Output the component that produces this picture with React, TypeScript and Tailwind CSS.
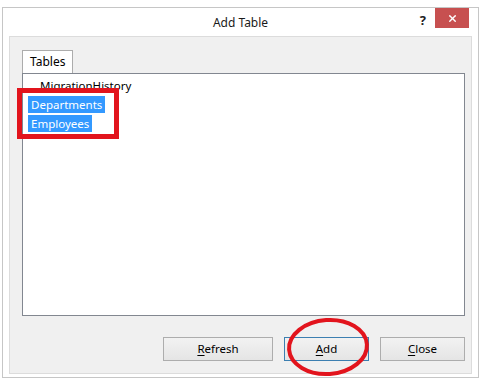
import { X } from 'lucide-react'

const rows = [
  { name: 'MigrationHistory', selected: false },
  { name: 'Departments', selected: true },
  { name: 'Employees', selected: true },
]

function DialogButton({ label, accessKey, width, isDefault }: { label: string; accessKey: number; width: string; isDefault?: boolean }) {
  return (
    <button
      className={`${width} h-[24px] text-[11.5px] text-black bg-gradient-to-b from-[#f2f2f2] to-[#e5e5e5] border ${
        isDefault ? 'border-[#3c7fb1]' : 'border-[#adadad]'
      }`}
    >
      {label.slice(0, accessKey)}
      <span className="underline underline-offset-2">{label[accessKey]}</span>
      {label.slice(accessKey + 1)}
    </button>
  )
}

export default function App() {
  return (
    <div
      className="relative w-[481px] h-[379px] bg-white pt-[7px] pl-[2px] overflow-hidden"
      style={{ fontFamily: '"Noto Sans", "Segoe UI", sans-serif' }}
    >
      {/* dialog window */}
      <div className="w-[477px] h-[371px] border border-[#c6c6c6] bg-white flex flex-col">
        <div className="h-[28px] flex items-start">
          <div className="w-[62px]" />
          <div className="flex-1 text-center text-[12px] text-[#1a1a1a] pt-[6px]">Add Table</div>
          <div className="w-[62px] flex items-start justify-end pr-[9px]">
            <span className="text-[13px] font-bold text-[#222] mt-[3px] mr-[9px]">?</span>
            <div className="w-[34px] h-[20px] bg-[#c75050] flex items-center justify-center">
              <X size={11} strokeWidth={3} color="white" />
            </div>
          </div>
        </div>

        <div className="ml-[6px] w-[463px] h-[338px] bg-[#f0f0f0] border border-[#dcdcdc] pt-[13px] pl-[12px] pr-[6px] flex flex-col">
          {/* tab header */}
          <div className="flex">
            <div className="h-[23px] px-[7px] border border-b-0 border-[#acacac] bg-white text-[12px] text-black flex items-center">
              Tables
            </div>
          </div>
          {/* list page */}
          <div className="h-[243px] bg-white border border-[#828790] pt-[2px] pl-[5px] flex flex-col">
            {rows.map((r) => (
              <div key={r.name} className="h-[19px] flex items-center">
                <span
                  className={`text-[11.5px] leading-[17px] px-[3px] ${
                    r.selected ? 'bg-[#3399ff] text-white' : 'ml-[9px] text-black'
                  }`}
                >
                  {r.name}
                </span>
              </div>
            ))}
          </div>
          {/* buttons */}
          <div className="flex justify-end gap-[11px] mt-[21px]">
            <DialogButton label="Refresh" accessKey={0} width="w-[110px]" />
            <DialogButton label="Add" accessKey={0} width="w-[85px]" isDefault />
            <DialogButton label="Close" accessKey={0} width="w-[85px]" />
          </div>
        </div>
      </div>

      {/* annotation overlay */}
      <svg className="absolute left-0 top-0 pointer-events-none" width={481} height={379}>
        <rect x={19.5} y={90.5} width={97} height={46} fill="none" stroke="#e2141d" strokeWidth={5} />
        <ellipse cx={328} cy={347} rx={39} ry={27} fill="none" stroke="#e2141d" strokeWidth={4} transform="rotate(-4 328 347)" />
      </svg>
    </div>
  )
}
